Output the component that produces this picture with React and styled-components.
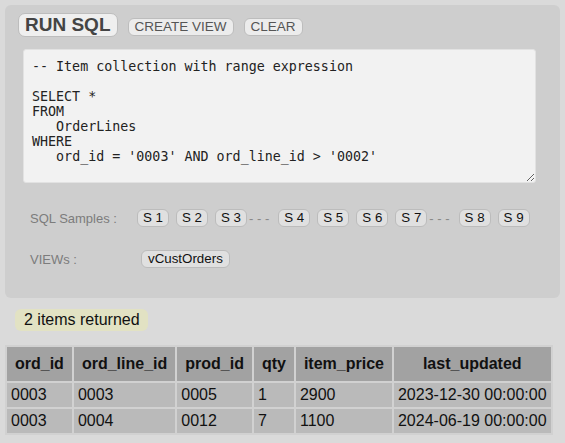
import React, { useState } from 'react';
import styled, { createGlobalStyle } from 'styled-components';

const GlobalStyle = createGlobalStyle`
  body {
    margin: 0;
    padding: 5px;
    background: #dadada;
    font-family: "Liberation Sans", Arial, sans-serif;
  }
`;

const Panel = styled.div`
  background: #cecece;
  border-radius: 6px;
  padding: 8px 13px 30px 13px;
`;

const Toolbar = styled.div`
  display: flex;
  align-items: baseline;
  gap: 10px;
`;

const RunButton = styled.button`
  font-family: "Liberation Sans", Arial, sans-serif;
  font-size: 19px;
  font-weight: bold;
  color: #444;
  background: #efefef;
  border: 1px solid #bdbdbd;
  border-radius: 7px;
  height: 24px;
  padding: 0 6px;
  line-height: 22px;
`;

const ToolButton = styled.button`
  font-family: "Liberation Sans", Arial, sans-serif;
  font-size: 13.5px;
  color: #555;
  background: #ececec;
  border: 1px solid #bdbdbd;
  border-radius: 6px;
  height: 18px;
  padding: 0 6px;
  line-height: 16px;
`;

const Editor = styled.textarea`
  display: block;
  box-sizing: border-box;
  margin: 12px 0 0 5px;
  width: 513px;
  height: 134px;
  padding: 9px 8px;
  border: 1px solid #e2e2e2;
  border-radius: 3px;
  background: #f2f2f2;
  color: #222;
  font-family: "DejaVu Sans Mono", monospace;
  font-size: 13.333px;
  line-height: 15px;
  resize: vertical;
  outline: none;
`;

const Row = styled.div`
  display: flex;
  align-items: center;
  height: 18px;
  padding-left: 12px;
  margin-top: ${p => p.$top}px;
  white-space: nowrap;
`;

const Label = styled.span`
  flex: none;
  width: 107px;
  font-size: 13px;
  color: #7c7c7c;
`;

const Chip = styled.button`
  flex: none;
  font-family: "Liberation Sans", Arial, sans-serif;
  font-size: 13.333px;
  color: #111;
  background: #e0e0e0;
  border: 1px solid #bcbcbc;
  border-radius: 6px;
  height: 18px;
  line-height: 16px;
  padding: 0 ${p => (p.$wide ? 6 : 5)}px;
  margin-right: 7px;
  margin-left: ${p => p.$indent || 0}px;
  white-space: pre;
`;

const Sep = styled.span`
  flex: none;
  font-size: 13px;
  color: #888;
  margin: 0 9px 0 -5px;
`;

const Count = styled.div`
  display: inline-block;
  margin: 11px 0 0 10px;
  padding: 0 8px 0 9px;
  height: 22px;
  line-height: 22px;
  font-size: 16px;
  color: #111;
  background: #e2e2c3;
  border-radius: 6px;
`;

const Table = styled.table`
  margin-top: 14px;
  background: #d1d1d1;
  border-spacing: 2px;
  font-size: 16px;
  color: #111;
`;

const Th = styled.th`
  background: #a2a2a2;
  padding: 8px 8px;
  font-weight: bold;
  text-align: center;
`;

const Td = styled.td`
  background: #bababa;
  padding: 3px 4px;
  text-align: left;
`;

const initialSql = `-- Item collection with range expression

SELECT *
FROM
   OrderLines
WHERE
   ord_id = '0003' AND ord_line_id > '0002'`;

const columns = ['ord_id', 'ord_line_id', 'prod_id', 'qty', 'item_price', 'last_updated'];
const rows = [
  ['0003', '0003', '0005', '1', '2900', '2023-12-30 00:00:00'],
  ['0003', '0004', '0012', '7', '1100', '2024-06-19 00:00:00'],
];

const App = () => {
  const [sql, setSql] = useState(initialSql);

  return (
    <>
      <GlobalStyle />
      <Panel>
        <Toolbar>
          <RunButton>RUN SQL</RunButton>
          <ToolButton>CREATE VIEW</ToolButton>
          <ToolButton onClick={() => setSql('')}>CLEAR</ToolButton>
        </Toolbar>
        <Editor value={sql} onChange={e => setSql(e.target.value)} spellCheck={false} />
        <Row $top={26}>
          <Label>SQL Samples :</Label>
          <Chip>S 1</Chip>
          <Chip>S 2</Chip>
          <Chip>S 3</Chip>
          <Sep>- - -</Sep>
          <Chip>S 4</Chip>
          <Chip>S 5</Chip>
          <Chip>S 6</Chip>
          <Chip>S 7</Chip>
          <Sep>- - -</Sep>
          <Chip>S 8</Chip>
          <Chip>S 9</Chip>
        </Row>
        <Row $top={23}>
          <Label>VIEWs :</Label>
          <Chip $wide $indent={4}>vCustOrders</Chip>
        </Row>
      </Panel>
      <Count>2 items returned</Count>
      <Table>
        <thead>
          <tr>
            {columns.map(c => <Th key={c}>{c}</Th>)}
          </tr>
        </thead>
        <tbody>
          {rows.map((r, i) => (
            <tr key={i}>
              {r.map((v, j) => <Td key={j}>{v}</Td>)}
            </tr>
          ))}
        </tbody>
      </Table>
    </>
  );
};

export default App;
